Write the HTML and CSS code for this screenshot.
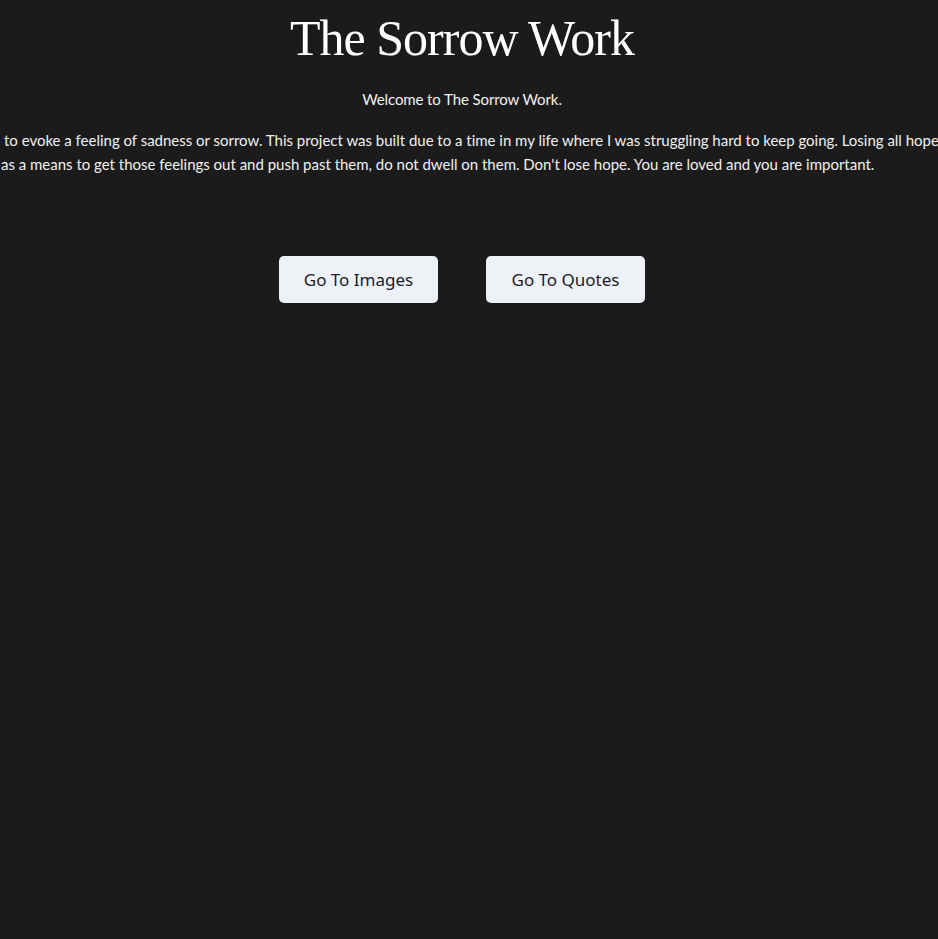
FILE: index.html
```html
<!DOCTYPE html>
<html lang="en">
<head>
<meta charset="utf-8">
<title>The Sorrow Work</title>
<link rel="stylesheet" href="styles.css">
</head>
<body>
<main class="page">
  <h1 class="title">The Sorrow Work</h1>
  <p class="welcome">Welcome to The Sorrow Work.</p>
  <div class="intro">
    <p class="intro-line intro-line-1">to evoke a feeling of sadness or sorrow. This project was built due to a time in my life where I was struggling hard to keep going. Losing all hope</p>
    <p class="intro-line intro-line-2">as a means to get those feelings out and push past them, do not dwell on them. Don't lose hope. You are loved and you are important.</p>
  </div>
  <nav class="actions">
    <a class="btn" href="#images">Go To Images</a>
    <a class="btn" href="#quotes">Go To Quotes</a>
  </nav>
</main>
</body>
</html>
```
FILE: styles.css
```css
html, body {
  margin: 0;
  padding: 0;
  background: #1b1b1b;
  overflow: hidden;
}
body {
  width: 938px;
  height: 939px;
}
.page {
  display: flex;
  flex-direction: column;
  align-items: center;
  padding-right: 14px;
  color: #f4f4f4;
}
.title {
  margin: 8px 0 0;
  font-family: "Liberation Serif", "DejaVu Serif", serif;
  font-weight: 400;
  font-size: 50px;
  line-height: 60px;
  color: #ffffff;
  letter-spacing: -1px;
}
.welcome {
  margin: 21px 0 0;
  font-family: "Lato", "Noto Sans", sans-serif;
  font-size: 15px;
  line-height: 20px;
  color: #f0f0f0;
  letter-spacing: -0.1px;
}
.intro {
  align-self: stretch;
  display: flex;
  flex-direction: column;
  margin-top: 19px;
}
.intro-line {
  margin: 0;
  white-space: nowrap;
  font-family: "Lato", "Noto Sans", sans-serif;
  font-size: 15px;
  line-height: 24px;
  color: #f0f0f0;
}
.intro-line-1 { padding-left: 4px; letter-spacing: -0.01px; }
.intro-line-2 { padding-left: 1px; letter-spacing: -0.01px; }
.actions {
  display: flex;
  gap: 48px;
  margin-top: 80px;
}
.btn {
  display: flex;
  align-items: center;
  justify-content: center;
  width: 159px;
  height: 47px;
  box-sizing: border-box;
  background: #eef2f6;
  border-radius: 5px;
  color: #1b1b2a;
  text-decoration: none;
  font-family: "Noto Sans", "Open Sans", sans-serif;
  font-size: 17px;
}
```
